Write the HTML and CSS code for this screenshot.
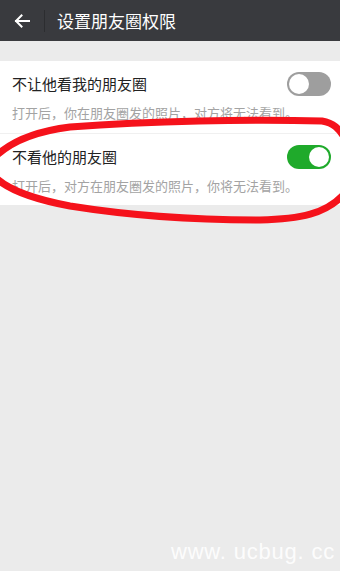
FILE: index.html
```html
<!DOCTYPE html>
<html lang="zh">
<head>
<meta charset="utf-8">
<link rel="stylesheet" href="styles.css">
</head>
<body>
<div class="page">
  <header class="bar">
    <span class="back">
      <svg width="16" height="14" viewBox="0 0 16 14"><path d="M15 7H2M7.5 1.5L2 7l5.5 5.5" fill="none" stroke="#fff" stroke-width="2" stroke-linecap="square"/></svg>
    </span>
    <span class="sep"></span>
    <h1 class="title">设置朋友圈权限</h1>
  </header>
  <section class="group">
    <div class="row">
      <div class="row-top">
        <span class="label">不让他看我的朋友圈</span>
        <span class="switch off"><span class="knob"></span></span>
      </div>
      <p class="hint">打开后，你在朋友圈发的照片，对方将无法看到。</p>
    </div>
    <div class="row">
      <div class="row-top">
        <span class="label">不看他的朋友圈</span>
        <span class="switch on"><span class="knob"></span></span>
      </div>
      <p class="hint">打开后，对方在朋友圈发的照片，你将无法看到。</p>
    </div>
  </section>
  <svg class="scribble" width="340" height="571" viewBox="0 0 340 571">
    <path d="M-4 156 C 12 141, 38 131, 70 127 C 150 121, 250 119, 322 121 C 334 123, 339 129, 344 137" fill="none" stroke="#f5121b" stroke-width="7" stroke-linecap="round"/>
    <path d="M-4 178 C 10 191, 38 200, 70 206 C 120 214, 180 220, 260 220 C 300 219, 326 214, 344 194" fill="none" stroke="#f5121b" stroke-width="7" stroke-linecap="round"/>
  </svg>
  <div class="watermark">www. ucbug. cc</div>
</div>
</body>
</html>
```
FILE: styles.css
```css
* { box-sizing: border-box; }
html, body { margin: 0; padding: 0; }
body {
  background: #ebebeb;
  font-family: "Noto Sans CJK SC", "Noto Sans", sans-serif;
}
.page {
  position: relative;
  width: 340px;
  height: 571px;
  overflow: hidden;
  background: #ebebeb;
}
.bar {
  height: 41px;
  background: #393a3e;
  display: flex;
  align-items: center;
}
.back {
  width: 44px;
  display: flex;
  justify-content: center;
  padding-top: 1px;
}
.sep {
  width: 1px;
  height: 22px;
  background: #2c2d30;
}
.title {
  margin: 0 0 0 12px;
  font-size: 17px;
  font-weight: normal;
  color: #fff;
  line-height: 20px;
}
.group {
  margin-top: 20px;
  background: #fff;
}
.row {
  height: 72px;
  padding: 13px 9px 0 12px;
}
.row + .row { border-top: 1px solid #f0f0f0; }
.row-top {
  display: flex;
  justify-content: space-between;
  align-items: center;
  height: 20px;
}
.label {
  font-size: 15px;
  color: #222;
  line-height: 20px;
}
.hint {
  margin: 10px 0 0;
  font-size: 13px;
  color: #a3a3a3;
  line-height: 18px;
  white-space: nowrap;
}
.switch {
  width: 44px;
  height: 24px;
  border-radius: 12px;
  display: flex;
  align-items: center;
  padding: 2px;
}
.switch .knob {
  width: 20px;
  height: 20px;
  border-radius: 50%;
  background: #fff;
}
.switch.off { background: #9e9e9e; justify-content: flex-start; }
.switch.on { background: #1faa2b; justify-content: flex-end; }
.scribble {
  position: absolute;
  left: 0;
  top: 0;
  pointer-events: none;
}
.watermark {
  position: absolute;
  right: 5px;
  bottom: 6px;
  font-family: "Liberation Sans", sans-serif;
  font-size: 22px;
  letter-spacing: 0.8px;
  color: rgba(255,255,255,0.9);
}
```
